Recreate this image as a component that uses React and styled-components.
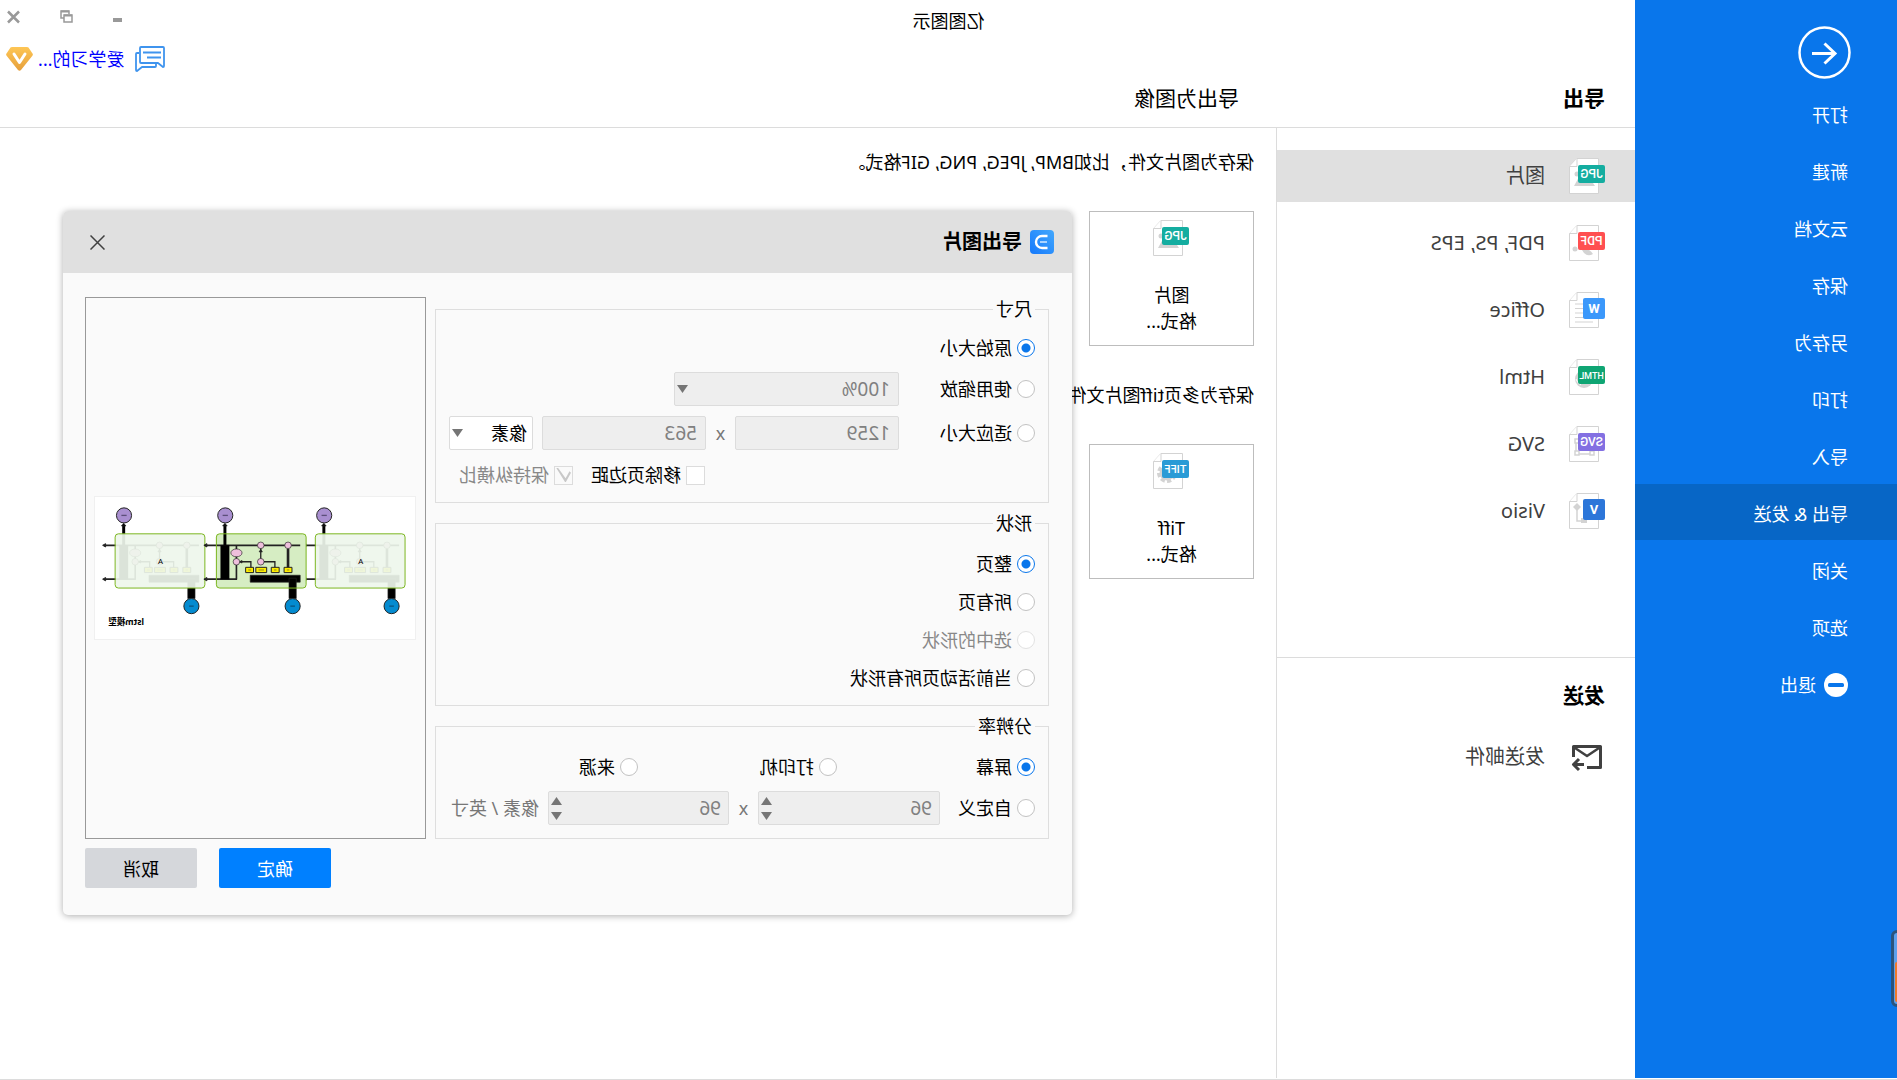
import React, { useState } from 'react';
import styled, { createGlobalStyle } from 'styled-components';

const GlobalStyle = createGlobalStyle`
  * {
    box-sizing: border-box;
  }

  body {
    margin: 0;
    background: #fff;
    overflow-x: hidden;
    font-kerning: none;
  }

  body, button, input, select {
    font-family: "Noto Sans", "Noto Sans CJK SC", sans-serif;
    font-size: 18px;
    color: #000;
  }

  button {
    border: 0;
    padding: 0;
    background: none;
    cursor: pointer;
  }
`

// The whole window is flipped left to right
const Window = styled.div`
  position: relative;
  display: flex;
  min-height: 100vh;
  padding-bottom: 1px;
  border-bottom: 1px solid #dcdcdc;
  background: #fff;
  transform: scaleX(-1);
  overflow: hidden;
`

const Sidebar = styled.nav`
  flex: 0 0 262px;
  display: flex;
  flex-direction: column;
  padding-top: 26px;
  background: #0976eb;
`

const BackButton = styled.button`
  width: 53px;
  height: 53px;
  margin: 0 0 6px 46px;

  svg {
    display: block;
  }
`

const MenuLink = styled.a`
  display: flex;
  align-items: center;
  gap: 8px;
  height: 57px;
  padding: 4px 0 0 49px;
  border-bottom: 1px solid #0976eb;
  background: ${({ $active }) => $active ? '#0766c6' : 'transparent'};
  color: #fff;
  line-height: 28px;
  text-decoration: none;
`

const DockHandle = styled.div`
  position: absolute;
  left: -14px;
  bottom: 72px;
  width: 20px;
  height: 77px;
  border: 3px solid #2a547e;
  border-radius: 6px;
  background: #5ba0ee;

  &::after {
    content: '';
    display: block;
    width: 13px;
    height: 40px;
    margin-top: 29px;
    border-radius: 2px;
    background: #f07a2c;
  }
`

const Main = styled.div`
  flex: 1;
  min-width: 0;
  display: flex;
  flex-direction: column;
`

const Header = styled.header`
  display: grid;
  grid-template-columns: 359px 1fr auto;
  height: 128px;
  border-bottom: 1px solid #dcdcdc;
`

const PageTitle = styled.h1`
  align-self: end;
  margin: 0;
  padding: 0 0 13px ${({ $inset }) => $inset}px;
  font-size: 21px;
  font-weight: ${({ $strong }) => $strong ? 700 : 400};
  line-height: 32px;
`

const AppTitle = styled.div`
  position: absolute;
  top: 8px;
  left: 0;
  right: 0;
  line-height: 26px;
  text-align: center;
  pointer-events: none;
`

const Corner = styled.div`
  display: flex;
  flex-direction: column;
  align-items: flex-end;
  gap: 22px;
  padding: 10px 6px 0 0;
`

const WindowControls = styled.div`
  display: flex;
  gap: 40px;
  height: 14px;
  padding-right: 1px;

  button, svg {
    display: block;
    height: 14px;
  }
`

const Account = styled.div`
  display: flex;
  align-items: center;
  gap: 5px;
  height: 26px;

  a {
    margin: 0 0 0 6px;
    color: #0000ff;
    line-height: 26px;
    text-decoration: none;
  }
`

const Columns = styled.div`
  flex: 1;
  display: flex;
`

const FormatColumn = styled.div`
  flex: 0 0 359px;
  border-right: 1px solid #dcdcdc;
  padding-top: 22px;
`

const FormatList = styled.div`
  display: flex;
  flex-direction: column;
  gap: 15px;
  padding-bottom: ${({ $last }) => $last ? 0 : 120}px;
  border-bottom: ${({ $last }) => $last ? '0' : '1px solid #dcdcdc'};
`

const FormatButton = styled.button`
  display: flex;
  align-items: center;
  gap: 24px;
  height: 52px;
  padding-left: 30px;
  background: ${({ $active }) => $active ? '#e0e0e0' : 'transparent'};
  color: #404040;
  font-size: 20px;
  line-height: 32px;
  text-align: left;

  svg {
    flex: 0 0 36px;
  }
`

const SectionTitle = styled.h2`
  margin: 21px 0 20px;
  padding-left: 30px;
  font-size: 21px;
  line-height: 32px;
`

const Content = styled.main`
  flex: 1;
  min-width: 0;
  padding: 21px 22px;
`

const Description = styled.p`
  margin: 0 0 35px;
  line-height: 27px;
`

const FormatCard = styled.button`
  display: flex;
  flex-direction: column;
  align-items: center;
  width: 165px;
  height: 135px;
  margin-bottom: 36px;
  padding-top: 8px;
  border: 1px solid #bdbdbd;
  line-height: 26px;

  svg {
    margin-bottom: 26px;
  }
`

const Dialog = styled.section`
  position: absolute;
  top: 211px;
  right: 63px;
  width: 1009px;
  border-radius: 5px;
  background: #fafafa;
  box-shadow: 0 1px 7px rgba(0, 0, 0, 0.32);
  overflow: hidden;
`

const DialogHeader = styled.header`
  display: flex;
  align-items: center;
  gap: 8px;
  height: 62px;
  padding: 0 27px 0 18px;
  background: #e0e0e0;

  h2 {
    flex: 1;
    margin: 0;
    font-size: 20px;
    line-height: 32px;
  }

  svg {
    display: block;
  }
`

const DialogBody = styled.form`
  display: grid;
  grid-template-columns: 614px 341px;
  column-gap: 9px;
  row-gap: 9px;
  padding: 24px 22px 27px 23px;
`

const Groups = styled.div`
  display: flex;
  flex-direction: column;
  gap: 8px;
`

const Group = styled.fieldset`
  display: flex;
  flex-direction: column;
  gap: 10px;
  min-width: 0;
  margin: 0;
  padding: ${({ $dense }) => $dense ? '13px 13px 12px' : '15px 13px 13px'};
  border: 1px solid #dedede;

  legend {
    padding: 0 3px;
    line-height: 24px;
  }
`

const Row = styled.div`
  display: grid;
  grid-template-columns: ${({ $columns }) => $columns || '1fr'};
  align-items: center;
  min-height: ${({ $height }) => $height || 28}px;
`

const Choice = styled.label`
  display: flex;
  align-items: center;
  gap: 5px;
  line-height: 28px;
  white-space: nowrap;
  color: ${({ $muted }) => $muted ? '#888' : '#000'};
`

const Radio = styled.input.attrs({ type: 'radio' })`
  appearance: none;
  flex: none;
  width: 18px;
  height: 18px;
  margin: 0;
  border: 1px solid #c2c2c2;
  border-radius: 50%;
  background: #fff;

  &:checked {
    border-color: #0976eb;
    background: radial-gradient(circle, #0976eb 4px, #fff 5px);
  }

  &:disabled {
    border-color: #e2e2e2;
  }
`

const Checkbox = styled.input.attrs({ type: 'checkbox' })`
  appearance: none;
  flex: none;
  width: 19px;
  height: 19px;
  margin: 0;
  border: 1px solid #dcdcdc;
  background: #fff;

  &:disabled {
    background: #fafafa;
  }

  &:checked {
    display: grid;
    place-items: center;
  }

  &:checked::before {
    content: '';
    width: 15px;
    height: 15px;
    background: #c8c8c8;
    clip-path: polygon(0 35%, 10% 25%, 36% 72%, 88% 0, 100% 0, 40% 96%, 34% 96%);
  }
`

const Field = styled.div`
  display: flex;
  align-items: center;
  height: 34px;
  padding-right: ${({ $arrow }) => $arrow ? 2 : 0}px;
  border: 1px solid #dcdcdc;
  border-radius: 2px;
  background: ${({ $muted }) => $muted ? '#eee' : '#fff'};

  input, select {
    appearance: none;
    flex: 1;
    min-width: 0;
    height: 32px;
    border: 0;
    padding: 0 0 0 ${({ $inset }) => $inset || 8}px;
    background: transparent;
    color: ${({ $muted }) => $muted ? '#808080' : '#000'};
    font-size: ${({ $muted }) => $muted ? 19 : 18}px;
    opacity: 1;
  }

  svg {
    display: block;
  }
`

const Spinner = styled.div`
  display: flex;
  flex-direction: column;
  gap: 7px;
`

const Times = styled.span`
  color: #777;
  font-size: 18px;
  line-height: 28px;
  text-align: center;
`

const Unit = styled.span`
  padding-left: 9px;
  color: #777;
  line-height: 28px;
  white-space: nowrap;
`

const Checks = styled.div`
  display: flex;
  justify-content: flex-end;
  align-items: center;
  gap: 18px;
  min-height: 30px;
  padding-right: 10px;
`

const Preview = styled.div`
  display: flex;
  align-items: center;
  justify-content: center;
  border: 1px solid #999;

  svg {
    display: block;
    border: 1px solid #f0f0f0;
    background: #fff;
  }
`

const Actions = styled.div`
  grid-column: 2;
  display: flex;
  justify-content: flex-end;
  gap: 22px;
`

const ActionButton = styled.button`
  width: 112px;
  height: 40px;
  border-radius: 2px;
  background: ${({ $primary }) => $primary ? '#0080ff' : '#d5d7db'};
  color: ${({ $primary }) => $primary ? '#fff' : '#000'};
`

const menuItems = ['打开', '新建', '云文档', '保存', '另存为', '打印', '导入', '导出 & 发送', '关闭', '选项'];

const formats = [
  { label: '图片', kind: 'jpg' },
  { label: 'PDF, PS, EPS', kind: 'pdf' },
  { label: 'Office', kind: 'office' },
  { label: 'Html', kind: 'html' },
  { label: 'SVG', kind: 'svg' },
  { label: 'Visio', kind: 'visio' },
];

const tags = {
  jpg: { text: 'JPG', color: '#14ada0', size: 12 },
  pdf: { text: 'PDF', color: '#ff4f51', size: 12 },
  office: { text: 'W', color: '#3b98fb', size: 13, small: true },
  html: { text: 'HTML', color: '#0fa573', size: 9 },
  svg: { text: 'SVG', color: '#8370e2', size: 12 },
  visio: { text: 'V', color: '#2c76d9', size: 13, small: true },
  tiff: { text: 'TIFF', color: '#2a9bd6', size: 11 },
};

const glyphs = {
  jpg: <g fill="#d3d3d3"><path d="M10 28l8-12 5 6 3-3 5 9z" /><circle cx="28" cy="16" r="2.5" /></g>,
  pdf: <g fill="#d3d3d3"><circle cx="30" cy="24" r="2.5" /><path d="M12 29q5-7 11-4l-2 3q-4 4-9 1z" /></g>,
  office: <path d="M12 12h18M12 16.500h18M12 21h18M12 25.500h18M12 30h18" stroke="#d3d3d3" strokeWidth="1.200" />,
  html: <g><circle cx="21" cy="20" r="9" fill="#d3d3d3" /><path d="M24 26q4-2 5-6" stroke="#fff" fill="none" /></g>,
  svg: <g fill="none" stroke="#d3d3d3" strokeWidth="1.500"><path d="M13 16h16v12H13z" /><path d="M11 25h4v4h-4zM26 25h4v4h-4zM26 13h4v4h-4z" fill="#fff" /></g>,
  visio: <g fill="#d3d3d3"><path d="M28 10l4 4-4 4-4-4z" /><path d="M18 25h6v5h-6z" /><path d="M28 16v12h-6" fill="none" stroke="#d3d3d3" strokeWidth="1.500" /></g>,
  tiff: <g><circle cx="22" cy="20" r="8" fill="none" stroke="#d3d3d3" strokeWidth="4" strokeDasharray="4 2.280" /><circle cx="22" cy="20" r="5.500" fill="none" stroke="#d3d3d3" strokeWidth="4" /></g>,
};

const FileIcon = ({ kind }) => {
  const { text, color, size, small } = tags[kind];
  const width = small ? 22 : 27;
  return (
    <svg width="36" height="36" viewBox="0 0 36 36" aria-hidden="true">
      <path d="M6.500 .5H28l7.500 8V35.500h-29z" fill="#fff" stroke="#d3d3d3" />
      {glyphs[kind]}
      <path d="M28 .5v8h7.500" fill="#fff" stroke="#d3d3d3" />
      <rect x="0" y={small ? 6 : 7} width={width} height={small ? 21 : 18} rx="2" fill={color} />
      <text
        x={width / 2}
        y={small ? 21 : 20}
        fill="#fff"
        fontFamily="Roboto, sans-serif"
        fontWeight={small ? 700 : 500}
        fontSize={size}
        textAnchor="middle"
      >
        {text}
      </text>
    </svg>
  );
};

const BackIcon = () => (
  <svg width="53" height="53" viewBox="0 0 53 53" fill="none" stroke="#fff" strokeWidth="2.500">
    <circle cx="26.500" cy="26.500" r="25" />
    <path d="M39 27.500H16M26.500 17.500l-10.500 10 10.500 10" strokeWidth="3" />
  </svg>
);

const ExitIcon = () => (
  <svg width="24" height="24" viewBox="0 0 24 24">
    <circle cx="12" cy="12" r="12" fill="#fff" />
    <rect x="4" y="10" width="16" height="4" rx="1.500" fill="#0976eb" />
  </svg>
);

const ChatIcon = () => (
  <svg width="30" height="26" viewBox="0 0 30 26" fill="none" stroke="#3f94ee" strokeWidth="1.800" strokeLinejoin="round">
    <path d="M2 1h22q1 0 1 1v14q0 1-1 1H7l-5 4q-1 0-1-1V2q0-1 1-1z" />
    <path d="M26 7h2q1 0 1 1v16q0 1-1 1l-5-4H10q-1 0-1-1v-2" />
    <path d="M4 6.500h18M4 11.500h14" />
  </svg>
);

const VipIcon = () => (
  <svg width="27" height="24" viewBox="0 0 27 24">
    <defs>
      <linearGradient id="vip" x1="0" y1="0" x2="0" y2="1">
        <stop offset="0" stopColor="#fec655" />
        <stop offset="1" stopColor="#e59f3c" />
      </linearGradient>
    </defs>
    <path d="M6 0h15q1 0 1.500.600L26.500 6.500q.8 1.200-.1 2.300L15 23q-1.500 1.600-3 0L.6 8.800Q-.3 7.700.5 6.500L4.500.6Q5 0 6 0z" fill="url(#vip)" />
    <path d="M8 7l5.500 8.500L19 7" fill="none" stroke="#fff" strokeWidth="3" strokeLinecap="round" strokeLinejoin="round" />
  </svg>
);

const LogoIcon = () => (
  <svg width="24" height="24" viewBox="0 0 24 24" fill="none">
    <defs>
      <linearGradient id="logo" x1="0" y1="0" x2="1" y2="1">
        <stop offset="0" stopColor="#43a8fd" />
        <stop offset="1" stopColor="#1579fb" />
      </linearGradient>
    </defs>
    <rect width="24" height="24" rx="4" fill="url(#logo)" />
    <path d="M7 12h7" stroke="#a9d3ff" strokeWidth="2" />
    <path d="M6.500 6H12a6 6 0 0 1 0 12H6.500" stroke="#fff" strokeWidth="2.400" />
  </svg>
);

const MailIcon = () => (
  <svg width="36" height="36" viewBox="0 0 36 36" fill="none" stroke="#404040" strokeWidth="3" strokeLinejoin="round">
    <path d="M18 28.500H4.500V7.500h27V18" />
    <path d="M6 9l12 8 12-8" strokeWidth="2.500" />
    <path d="M32 25.500H21M26 20l5.500 5.500L26 31" />
  </svg>
);

const Arrow = ({ up }) => (
  <svg width="11" height="8" viewBox="0 0 11 8" aria-hidden="true">
    <path d={up ? 'M0 8L5.500 0 11 8z' : 'M0 0h11L5.500 8z'} fill="#757575" />
  </svg>
);

// One LSTM cell, x = 0 is its left edge
const Cell = ({ x, y, faded }) => (
  <g transform={`translate(${x} ${y})`} stroke="#222" fill="none" strokeWidth="5">
    {!faded && <rect x="0" y="-35" width="274" height="165" rx="10" fill="#d6edc3" stroke="none" />}
    <path d="M18 0h284M212 0v103M210 103h92" />
    <path d="M302 -5l9 5-9 5zM302 98l9 5-9 5z" fill="#222" strokeWidth="3" />
    <path d="M247 0v-60" stroke="#000" strokeWidth="9" />
    <path d="M247 -67l7 8h-14z" fill="#000" strokeWidth="2" />
    <path d="M234 0h26v103h-26z" fill="#000" stroke="#000" strokeWidth="1" />
    <path d="M18 91h152v21H18z" fill="#000" strokeWidth="2" />
    <path d="M30 100h22v62H30z" fill="#000" strokeWidth="2" />
    <path d="M138 50V8M212 50h-44v20M138 50H95v20" strokeWidth="4" />
    <path d="M138 12l5 8h-10zM203 50l-8 4v-8z" fill="#222" strokeWidth="2" />
    <path d="M55 10v60" strokeWidth="8" />
    <g fill="#eebfdc" strokeWidth="2">
      <ellipse cx="212" cy="23" rx="17" ry="12" />
      <circle cx="212" cy="50" r="10" />
      <circle cx="138" cy="50" r="10" />
      <circle cx="138" cy="0" r="10" />
      <circle cx="55" cy="0" r="10" />
    </g>
    <g fill="#ffee00" strokeWidth="3">
      <path d="M160 67h24v16h-24zM120 67h33v16h-33zM82 67h24v16H82zM43 67h24v16H43z" />
    </g>
    <path d="M167 75h9M128 75h17M90 75h8M51 75h8" strokeWidth="3" stroke="#8a8420" />
    {faded && <rect x="0" y="-35" width="272" height="165" rx="10" fill="#eef6ec" fillOpacity="0.920" stroke="none" />}
    <rect x="0" y="-35" width="273" height="165" rx="10" stroke="#7ab51d" strokeWidth="3" />
    <circle cx="246" cy="-91" r="23" fill="#a98fd0" strokeWidth="3" />
    <path d="M238 -91h16" stroke="#5c4f7a" strokeWidth="4" />
    <circle cx="41" cy="185" r="23" fill="#048bd0" strokeWidth="3" />
    <path d="M34 185h14" stroke="#0a5580" strokeWidth="4" />
    {faded && <text x="135" y="58" textAnchor="middle" fontSize="24" fill="#000" stroke="none">A</text>}
  </g>
);

const Diagram = () => (
  <svg width="322" height="144" viewBox="0 0 965 432" fontFamily="Noto Sans, Noto Sans CJK SC, sans-serif">
    <Cell x={26} y={147} faded />
    <Cell x={635} y={147} faded />
    <Cell x={327} y={147} />
    <text x="820" y="389" fontSize="26" fontWeight="700">lstm模型</text>
  </svg>
);

const RadioChoice = ({ group, label, value, onChange, disabled }) => (
  <Choice $muted={disabled}>
    <Radio name={group} checked={value === label} disabled={disabled} onChange={() => onChange(label)} />
    {label}
  </Choice>
);

const SpinField = ({ label }) => (
  <Field $muted $arrow $inset={7}>
    <input aria-label={label} defaultValue="96" disabled />
    <Spinner>
      <button type="button" aria-label="增加" disabled><Arrow up /></button>
      <button type="button" aria-label="减少" disabled><Arrow /></button>
    </Spinner>
  </Field>
);

const ExportDialog = () => {
  const [size, setSize] = useState('原始大小');
  const [shape, setShape] = useState('整页');
  const [resolution, setResolution] = useState('屏幕');

  return (
    <Dialog role="dialog" aria-labelledby="dialog-title">
      <DialogHeader>
        <LogoIcon />
        <h2 id="dialog-title">导出图片</h2>
        <button type="button" aria-label="关闭">
          <svg width="15" height="15" viewBox="0 0 15 15" stroke="#404040" strokeWidth="1.500">
            <path d="M.5 .5l14 14M14.500 .5l-14 14" />
          </svg>
        </button>
      </DialogHeader>
      <DialogBody>
        <Groups>
          <Group $dense>
            <legend>尺寸</legend>
            <Row>
              <RadioChoice group="size" label="原始大小" value={size} onChange={setSize} />
            </Row>
            <Row $columns="136px 225px" $height={34}>
              <RadioChoice group="size" label="使用缩放" value={size} onChange={setSize} />
              <Field $muted $arrow>
                <select aria-label="缩放" disabled><option>100%</option></select>
                <Arrow />
              </Field>
            </Row>
            <Row $columns="136px 164px 29px 164px 9px 84px" $height={34}>
              <RadioChoice group="size" label="适应大小" value={size} onChange={setSize} />
              <Field $muted><input aria-label="宽度" defaultValue="1259" disabled /></Field>
              <Times>x</Times>
              <Field $muted><input aria-label="高度" defaultValue="563" disabled /></Field>
              <span />
              <Field $arrow $inset={5}>
                <select aria-label="单位"><option>像素</option></select>
                <Arrow />
              </Field>
            </Row>
            <Checks>
              <Choice><Checkbox />移除页边距</Choice>
              <Choice $muted><Checkbox defaultChecked disabled />保持纵横比</Choice>
            </Checks>
          </Group>
          <Group>
            <legend>形状</legend>
            <RadioChoice group="shape" label="整页" value={shape} onChange={setShape} />
            <RadioChoice group="shape" label="所有页" value={shape} onChange={setShape} />
            <RadioChoice group="shape" label="选中的形状" value={shape} onChange={setShape} disabled />
            <RadioChoice group="shape" label="当前活动页所有形状" value={shape} onChange={setShape} />
          </Group>
          <Group>
            <legend>分辨率</legend>
            <Row $columns="198px 199px 1fr">
              <RadioChoice group="resolution" label="屏幕" value={resolution} onChange={setResolution} />
              <RadioChoice group="resolution" label="打印机" value={resolution} onChange={setResolution} />
              <RadioChoice group="resolution" label="来源" value={resolution} onChange={setResolution} />
            </Row>
            <Row $columns="95px 182px 29px 181px 1fr" $height={34}>
              <RadioChoice group="resolution" label="自定义" value={resolution} onChange={setResolution} />
              <SpinField label="水平分辨率" />
              <Times>x</Times>
              <SpinField label="垂直分辨率" />
              <Unit>像素 / 英寸</Unit>
            </Row>
          </Group>
        </Groups>
        <Preview><Diagram /></Preview>
        <Actions>
          <ActionButton type="button" $primary>确定</ActionButton>
          <ActionButton type="button">取消</ActionButton>
        </Actions>
      </DialogBody>
    </Dialog>
  );
};

const App = () => {
  const [format, setFormat] = useState('jpg');

  return (
    <>
      <GlobalStyle />
      <Window>
        <Sidebar>
          <BackButton type="button" aria-label="返回"><BackIcon /></BackButton>
          {menuItems.map((item) => (
            <MenuLink key={item} href="#" $active={item === '导出 & 发送'}>{item}</MenuLink>
          ))}
          <MenuLink href="#"><ExitIcon />退出</MenuLink>
        </Sidebar>
        <Main>
          <Header>
            <PageTitle $inset={30} $strong>导出</PageTitle>
            <PageTitle as="h2" $inset={37}>导出为图像</PageTitle>
            <Corner>
              <WindowControls>
                <button type="button" aria-label="最小化">
                  <svg width="9" height="14" viewBox="0 0 9 14"><path d="M0 8h9v4H0z" fill="#999" /></svg>
                </button>
                <button type="button" aria-label="还原">
                  <svg width="13" height="14" viewBox="0 0 13 14" fill="none" stroke="#999" strokeWidth="1.500">
                    <path d="M4 4V1h8v7H9" />
                    <path d="M1 5h8v7H1z" />
                    <path d="M4 1.500h8M1 5.500h8" strokeWidth="2" />
                  </svg>
                </button>
                <button type="button" aria-label="关闭窗口">
                  <svg width="13" height="14" viewBox="0 0 13 14" stroke="#999" strokeWidth="2.500">
                    <path d="M1 1.500l11 11M12 1.500l-11 11" />
                  </svg>
                </button>
              </WindowControls>
              <Account>
                <ChatIcon />
                <a href="#">爱学习的...</a>
                <VipIcon />
              </Account>
            </Corner>
          </Header>
          <Columns>
            <FormatColumn>
              <FormatList>
                {formats.map(({ label, kind }) => (
                  <FormatButton key={kind} type="button" $active={kind === format} onClick={() => setFormat(kind)}>
                    <FileIcon kind={kind} />
                    {label}
                  </FormatButton>
                ))}
              </FormatList>
              <SectionTitle>发送</SectionTitle>
              <FormatList $last>
                <FormatButton type="button"><MailIcon />发送邮件</FormatButton>
              </FormatList>
            </FormatColumn>
            <Content>
              <Description>保存为图片文件，比如BMP, JPEG, PNG, GIF格式。</Description>
              <FormatCard type="button">
                <FileIcon kind="jpg" />
                <span>图片</span>
                <span>格式...</span>
              </FormatCard>
              <Description>保存为多页tiff图片文件</Description>
              <FormatCard type="button">
                <FileIcon kind="tiff" />
                <span>Tiff</span>
                <span>格式...</span>
              </FormatCard>
            </Content>
          </Columns>
        </Main>
        <AppTitle>亿图图示</AppTitle>
        <DockHandle />
        <ExportDialog />
      </Window>
    </>
  );
};

export default App;
